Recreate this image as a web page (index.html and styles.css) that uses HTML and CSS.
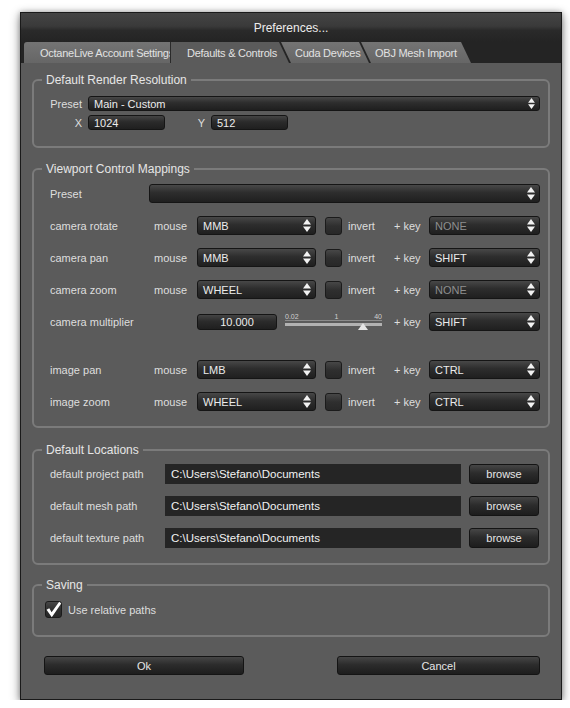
FILE: index.html
```html
<!DOCTYPE html>
<html>
<head>
<meta charset="utf-8">
<title>Preferences</title>
<link rel="stylesheet" href="styles.css">
</head>
<body>
<div class="window">
  <div class="titlebar">Preferences...</div>
  <div class="tabs">
    <div class="tab tab-first">OctaneLive Account Settings</div>
    <div class="tab tab-active">Defaults &amp; Controls</div>
    <div class="tab tab-mid tab-cuda">Cuda Devices</div>
    <div class="tab tab-mid tab-obj">OBJ Mesh Import</div>
  </div>
  <div class="content">
    <fieldset class="group g-res">
      <legend>Default Render Resolution</legend>
      <div class="res-row">
        <span class="res-label">Preset</span>
        <div class="combo combo-sm"><span>Main - Custom</span><svg class="arr arr-sm" viewBox="0 0 8 13"><path d="M4 0 8 5.5H0Z"/><path d="M0 7.5H8L4 13Z"/></svg></div>
      </div>
      <div class="res-row">
        <span class="res-label">X</span>
        <div class="num">1024</div>
        <span class="res-label y-label">Y</span>
        <div class="num">512</div>
      </div>
    </fieldset>

    <fieldset class="group g-view">
      <legend>Viewport Control Mappings</legend>
      <div class="vrow">
        <span class="v-plabel">Preset</span>
        <div class="combo combo-p"><span></span><svg class="arr" viewBox="0 0 8 13"><path d="M4 0 8 5.5H0Z"/><path d="M0 7.5H8L4 13Z"/></svg></div>
      </div>
      <div class="vrow">
        <span class="v-label">camera rotate</span><span class="v-mouse">mouse</span>
        <div class="combo combo-m"><span>MMB</span><svg class="arr" viewBox="0 0 8 13"><path d="M4 0 8 5.5H0Z"/><path d="M0 7.5H8L4 13Z"/></svg></div>
        <div class="check"></div><span class="v-invert">invert</span><span class="v-key">+ key</span>
        <div class="combo combo-k"><span class="dim">NONE</span><svg class="arr" viewBox="0 0 8 13"><path d="M4 0 8 5.5H0Z"/><path d="M0 7.5H8L4 13Z"/></svg></div>
      </div>
      <div class="vrow">
        <span class="v-label">camera pan</span><span class="v-mouse">mouse</span>
        <div class="combo combo-m"><span>MMB</span><svg class="arr" viewBox="0 0 8 13"><path d="M4 0 8 5.5H0Z"/><path d="M0 7.5H8L4 13Z"/></svg></div>
        <div class="check"></div><span class="v-invert">invert</span><span class="v-key">+ key</span>
        <div class="combo combo-k"><span>SHIFT</span><svg class="arr" viewBox="0 0 8 13"><path d="M4 0 8 5.5H0Z"/><path d="M0 7.5H8L4 13Z"/></svg></div>
      </div>
      <div class="vrow">
        <span class="v-label">camera zoom</span><span class="v-mouse">mouse</span>
        <div class="combo combo-m"><span>WHEEL</span><svg class="arr" viewBox="0 0 8 13"><path d="M4 0 8 5.5H0Z"/><path d="M0 7.5H8L4 13Z"/></svg></div>
        <div class="check"></div><span class="v-invert">invert</span><span class="v-key">+ key</span>
        <div class="combo combo-k"><span class="dim">NONE</span><svg class="arr" viewBox="0 0 8 13"><path d="M4 0 8 5.5H0Z"/><path d="M0 7.5H8L4 13Z"/></svg></div>
      </div>
      <div class="vrow">
        <span class="v-label">camera multiplier</span><span class="v-mouse"></span>
        <div class="numbox">10.000</div>
        <div class="slider">
          <div class="slider-scale"><span>0.02</span><span>1</span><span>40</span></div>
          <div class="slider-track"><span class="slider-thumb"></span></div>
        </div>
        <span class="v-key v-key-m">+ key</span>
        <div class="combo combo-k"><span>SHIFT</span><svg class="arr" viewBox="0 0 8 13"><path d="M4 0 8 5.5H0Z"/><path d="M0 7.5H8L4 13Z"/></svg></div>
      </div>
      <div class="vrow vrow-sep">
        <span class="v-label">image pan</span><span class="v-mouse">mouse</span>
        <div class="combo combo-m"><span>LMB</span><svg class="arr" viewBox="0 0 8 13"><path d="M4 0 8 5.5H0Z"/><path d="M0 7.5H8L4 13Z"/></svg></div>
        <div class="check"></div><span class="v-invert">invert</span><span class="v-key">+ key</span>
        <div class="combo combo-k"><span>CTRL</span><svg class="arr" viewBox="0 0 8 13"><path d="M4 0 8 5.5H0Z"/><path d="M0 7.5H8L4 13Z"/></svg></div>
      </div>
      <div class="vrow">
        <span class="v-label">image zoom</span><span class="v-mouse">mouse</span>
        <div class="combo combo-m"><span>WHEEL</span><svg class="arr" viewBox="0 0 8 13"><path d="M4 0 8 5.5H0Z"/><path d="M0 7.5H8L4 13Z"/></svg></div>
        <div class="check"></div><span class="v-invert">invert</span><span class="v-key">+ key</span>
        <div class="combo combo-k"><span>CTRL</span><svg class="arr" viewBox="0 0 8 13"><path d="M4 0 8 5.5H0Z"/><path d="M0 7.5H8L4 13Z"/></svg></div>
      </div>
    </fieldset>

    <fieldset class="group g-loc">
      <legend>Default Locations</legend>
      <div class="lrow">
        <span class="l-label">default project path</span>
        <div class="path">C:\Users\Stefano\Documents</div>
        <div class="btn browse">browse</div>
      </div>
      <div class="lrow">
        <span class="l-label">default mesh path</span>
        <div class="path">C:\Users\Stefano\Documents</div>
        <div class="btn browse">browse</div>
      </div>
      <div class="lrow">
        <span class="l-label">default texture path</span>
        <div class="path">C:\Users\Stefano\Documents</div>
        <div class="btn browse">browse</div>
      </div>
    </fieldset>

    <fieldset class="group g-save">
      <legend>Saving</legend>
      <div class="srow">
        <div class="check check-on"><svg viewBox="0 0 17 17" width="17" height="17"><path d="M1.5 8.8 4.3 7.2 6.6 11.2 14.2 0.8 16.2 2.4 6.8 16.2Z"/></svg></div>
        <span>Use relative paths</span>
      </div>
    </fieldset>

    <div class="buttons">
      <div class="btn btn-ok">Ok</div>
      <div class="btn btn-cancel">Cancel</div>
    </div>
  </div>
</div>
</body>
</html>
```
FILE: styles.css
```css
* { box-sizing: border-box; }

body {
  margin: 0;
  background: #ffffff;
  font-family: "Liberation Sans", Arial, sans-serif;
  font-size: 11px;
  color: #dedede;
}

.window {
  margin: 12px 0 0 20px;
  width: 542px;
  height: 688px;
  border: 1px solid #1a1a1a;
  background: #5b5b5b;
  box-shadow: 0 3px 10px rgba(0, 0, 0, 0.45), 0 0 5px rgba(0, 0, 0, 0.25);
  display: flex;
  flex-direction: column;
}

.titlebar {
  flex: none;
  height: 29px;
  display: flex;
  align-items: center;
  justify-content: center;
  font-size: 12px;
  color: #ececec;
  background: linear-gradient(#444444, #3a3a3a 45%, #2a2a2a 60%, #242424);
}

.tabs {
  flex: none;
  height: 21px;
  background: #242424;
  display: flex;
  align-items: stretch;
  padding-left: 3px;
}

.tab {
  position: relative;
  display: flex;
  align-items: center;
  white-space: nowrap;
  overflow: hidden;
  font-size: 11px;
  letter-spacing: -0.25px;
  color: #e2e2e2;
  background: linear-gradient(#747474, #666666);
}

.tab-first {
  width: 160px;
  padding-left: 16px;
  border-radius: 3px 0 0 0;
}

.tab-active {
  z-index: 2;
  width: 119px;
  margin-left: -14px;
  padding-left: 16px;
  background: #5b5b5b;
  border-left: 1px solid #2a2a2a;
  clip-path: polygon(0 0, calc(100% - 10px) 0, 100% 100%, 0 100%);
}

.tab-mid {
  z-index: 1;
  margin-left: -8px;
  clip-path: polygon(0 0, calc(100% - 10px) 0, 100% 100%, 10px 100%);
}

.tab-cuda { width: 88px; padding-left: 14px; }
.tab-obj { width: 110px; padding-left: 14px; }

.content {
  flex: 1;
  padding: 10px 11px 0;
  display: flex;
  flex-direction: column;
}

.group {
  margin: 0;
  min-width: 0;
  border: 2px solid #7b7b7b;
  border-radius: 6px;
  padding: 9px 8px 16px 16px;
}

.group legend {
  font-size: 12px;
  line-height: 14px;
  padding: 0 4px;
  margin-left: -8px;
  color: #e6e6e6;
}

.group.g-view { margin-top: 14px; padding-top: 8px; padding-bottom: 15px; }
.group.g-loc { margin-top: 15px; padding-top: 7px; padding-bottom: 15px; }
.group.g-save { margin-top: 13px; padding-top: 9px; padding-bottom: 17px; }

/* controls */
.combo {
  display: flex;
  align-items: center;
  justify-content: space-between;
  padding: 0 4px 0 5px;
  background: linear-gradient(#484848, #2d2d2d 45%, #1f1f1f);
  border: 1px solid #151515;
  border-radius: 3px;
  color: #ececec;
  white-space: nowrap;
}

.combo .dim { color: #8e8e8e; }

.arr {
  width: 8px;
  height: 13px;
  fill: #f2f2f2;
  flex: none;
}

.arr-sm { width: 7px; height: 11px; }

.num, .numbox {
  display: flex;
  align-items: center;
  height: 15px;
  background: linear-gradient(#444444, #2b2b2b 45%, #1f1f1f);
  border: 1px solid #151515;
  border-radius: 3px;
  color: #ececec;
}

.num { width: 77px; padding-left: 5px; }

/* resolution */
.res-row {
  display: flex;
  align-items: center;
  gap: 6px;
  height: 15px;
}

.res-row + .res-row { margin-top: 4px; }

.res-label { width: 32px; text-align: right; flex: none; }
.res-label.y-label { width: 8px; margin-left: 26px; }

.combo-sm { flex: 1; height: 15px; }

/* viewport */
.vrow {
  display: flex;
  align-items: center;
  height: 19px;
}

.vrow + .vrow { margin-top: 13px; }
.vrow.vrow-sep { margin-top: 29px; }

.v-plabel { width: 99px; flex: none; }
.combo-p { width: 392px; height: 19px; }

.v-label { width: 104px; flex: none; }
.v-mouse { width: 43px; flex: none; }
.combo-m { width: 119px; height: 19px; flex: none; }

.check {
  width: 17px;
  height: 18px;
  flex: none;
  margin-left: 9px;
  border: 1px solid #1b1b1b;
  border-radius: 3px;
  background: linear-gradient(#474747, #2f2f2f 50%, #282828);
}

.v-invert { width: 46px; margin-left: 6px; flex: none; }
.v-key { width: 35px; flex: none; }
.v-key-m { margin-left: 12px; }
.combo-k { width: 111px; height: 19px; flex: none; }

.numbox {
  width: 80px;
  height: 16px;
  justify-content: center;
  flex: none;
}

.slider {
  width: 97px;
  height: 19px;
  margin-left: 8px;
  flex: none;
  display: flex;
  flex-direction: column;
  padding-top: 1px;
}

.slider-scale {
  display: flex;
  justify-content: space-between;
  height: 8px;
  font-size: 7px;
  line-height: 7px;
  color: #cfcfcf;
  border-bottom: 1px solid #8c8c8c;
}

.slider-track {
  position: relative;
  height: 3px;
  margin-top: 2px;
  background: #b2b2b2;
}

.slider-thumb {
  position: absolute;
  left: 73px;
  top: 0;
  width: 0;
  height: 0;
  border-left: 5.5px solid transparent;
  border-right: 5.5px solid transparent;
  border-bottom: 7px solid #e6e6e6;
}

/* locations */
.lrow {
  display: flex;
  align-items: center;
  height: 20px;
}

.lrow + .lrow { margin-top: 12px; }

.l-label { width: 115px; flex: none; }

.path {
  width: 296px;
  height: 20px;
  flex: none;
  display: flex;
  align-items: center;
  padding-left: 6px;
  background: #252525;
  color: #f2f2f2;
  font-size: 11.5px;
}

.btn {
  display: flex;
  align-items: center;
  justify-content: center;
  background: linear-gradient(#464646, #2c2c2c 45%, #1d1d1d);
  border: 1px solid #141414;
  border-radius: 3px;
  color: #e6e6e6;
}

.browse { width: 70px; height: 20px; margin-left: 8px; flex: none; }

/* saving */
.srow {
  display: flex;
  align-items: center;
  gap: 6px;
  height: 17px;
}

.check.check-on {
  margin-left: -5px;
  height: 17px;
  position: relative;
  overflow: visible;
}

.check-on svg {
  position: absolute;
  left: -1px;
  top: -1px;
  fill: #ffffff;
}

/* buttons */
.buttons {
  margin-top: 19px;
  display: flex;
  justify-content: space-between;
  padding: 0 10px 0 12px;
}

.btn-ok { width: 200px; height: 19px; }
.btn-cancel { width: 203px; height: 19px; }
```
